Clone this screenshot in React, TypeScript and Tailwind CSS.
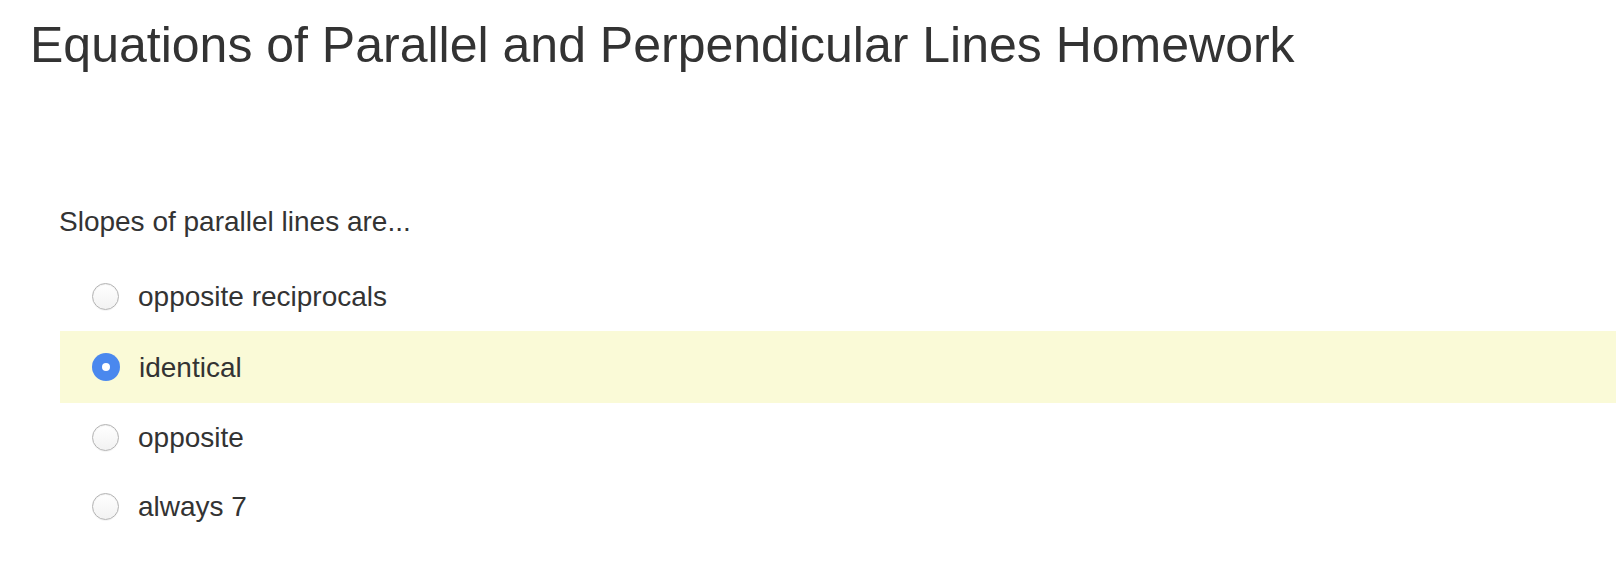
import React from "react";

const options = [
  { label: "opposite reciprocals", selected: false, h: "h-[70px]" },
  { label: "identical", selected: true, h: "h-[72px]" },
  { label: "opposite", selected: false, h: "h-[69px]" },
  { label: "always 7", selected: false, h: "h-[69px]" },
];

function Radio({ selected }: { selected: boolean }) {
  if (selected) {
    return (
      <span className="flex h-[28px] w-[28px] shrink-0 items-center justify-center rounded-full bg-[#4a88ee]">
        <span className="h-[8px] w-[8px] rounded-full bg-white" />
      </span>
    );
  }
  return (
    <span className="h-[27px] w-[27px] shrink-0 rounded-full border border-[#b3b3b3] bg-gradient-to-b from-white to-[#f2f2f2] shadow-[inset_0_1px_1px_rgba(0,0,0,0.06),0_1px_0_rgba(0,0,0,0.04)]" />
  );
}

export default function App() {
  return (
    <div className="h-[588px] w-[1616px] overflow-hidden bg-white font-['Liberation_Sans',Arial,sans-serif] text-[#333333]">
      <h1 className="pl-[30px] pt-[20px] text-[50px] font-normal leading-[50px]">
        Equations of Parallel and Perpendicular Lines Homework
      </h1>
      <p className="mt-[138px] pl-[59px] text-[28px] leading-[28px]">
        Slopes of parallel lines are...
      </p>
      <div className="mt-[25px] pl-[60px]">
        {options.map((o) => (
          <div
            key={o.label}
            className={`flex items-center pl-[32px] ${o.h} ${o.selected ? "bg-[#fafad7]" : ""}`}
          >
            <Radio selected={o.selected} />
            <span className="ml-[19px] pt-[1px] text-[28px] leading-[28px]">{o.label}</span>
          </div>
        ))}
      </div>
    </div>
  );
}
